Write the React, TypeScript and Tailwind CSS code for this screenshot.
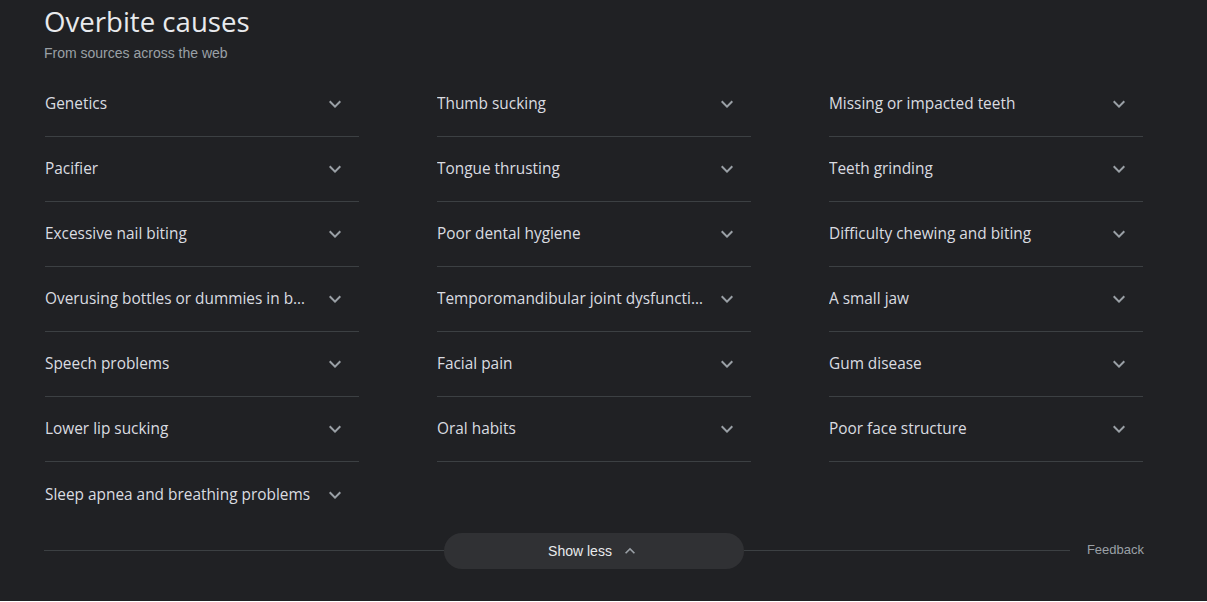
import React from "react";

const causes = [
  "Genetics",
  "Thumb sucking",
  "Missing or impacted teeth",
  "Pacifier",
  "Tongue thrusting",
  "Teeth grinding",
  "Excessive nail biting",
  "Poor dental hygiene",
  "Difficulty chewing and biting",
  "Overusing bottles or dummies in babies",
  "Temporomandibular joint dysfunction",
  "A small jaw",
  "Speech problems",
  "Facial pain",
  "Gum disease",
  "Lower lip sucking",
  "Oral habits",
  "Poor face structure",
  "Sleep apnea and breathing problems",
];

const Chevron = ({ up = false }: { up?: boolean }) => (
  <svg viewBox="0 0 24 24" className={(up ? "h-5 w-5" : "h-6 w-6") + " shrink-0 fill-[#9aa0a6]"}>
    {up ? (
      <path d="M7.41 15.41L12 10.83l4.59 4.58L18 14l-6-6-6 6z" />
    ) : (
      <path d="M16.59 8.59L12 13.17 7.41 8.59 6 10l6 6 6-6z" />
    )}
  </svg>
);

const App = () => {
  return (
    <div className="min-h-[602px] w-[1207px] bg-[#202124] font-['Open_Sans',sans-serif]">
      <div className="pl-[44px] w-[1144px]">
        <h2 className="text-[27.6px] leading-[44px] text-[#e8eaed] -mt-[1px]">Overbite causes</h2>
        <div className="font-['Liberation_Sans',Arial,sans-serif] text-[14px] leading-[20px] text-[#9aa0a6]">
          From sources across the web
        </div>

        <div className="mt-[9px] grid grid-cols-[314px_314px_314px] gap-x-[78px] pl-px">
          {causes.map((c, i) => (
            <div
              key={c}
              className={
                "flex h-[65px] items-center justify-between pr-[12px] " +
                (i === causes.length - 1 ? "" : "border-b border-[#3c4043]")
              }
            >
              <span className="truncate pr-[10px] text-[15.4px] text-[#dadce0]">{c}</span>
              <Chevron />
            </div>
          ))}
        </div>

        <div className="mt-[6px] flex h-[36px] items-center">
          <div className="h-px w-[400px] bg-[#3c4043] -mt-[2px]" />
          <button className="flex h-[36px] w-[300px] items-center justify-center gap-[8px] rounded-full bg-[#303134] font-['Liberation_Sans',Arial,sans-serif] text-[14px] text-[#e8eaed]">
            <span>Show less</span>
            <Chevron up />
          </button>
          <div className="h-px flex-1 bg-[#3c4043] -mt-[2px]" />
          <span className="ml-[17px] font-['Liberation_Sans',Arial,sans-serif] text-[13px] text-[#9aa0a6] -mt-[3px]">
            Feedback
          </span>
        </div>
      </div>
    </div>
  );
};

export default App;
